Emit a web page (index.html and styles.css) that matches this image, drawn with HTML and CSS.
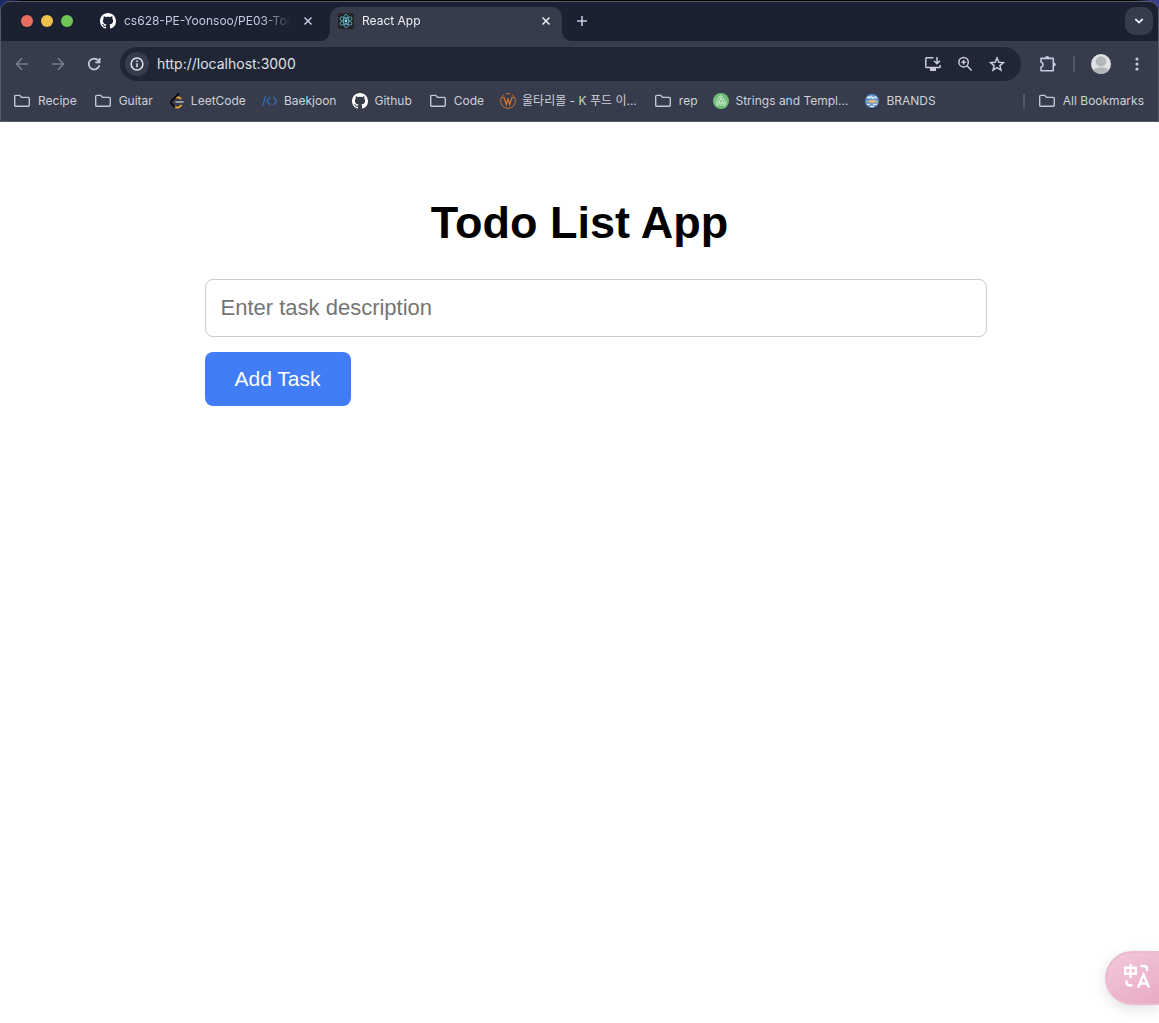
FILE: index.html
```html
<!DOCTYPE html>
<html lang="en">
<head>
<meta charset="utf-8">
<title>React App</title>
<meta name="viewport" content="width=device-width, initial-scale=1">
<link rel="stylesheet" href="styles.css">
</head>
<body>
<svg class="defs" aria-hidden="true">
  <symbol id="github" viewBox="0 0 16 16"><path fill="#fff" d="M8 0C3.58 0 0 3.58 0 8c0 3.54 2.29 6.53 5.47 7.59.4.07.55-.17.55-.38 0-.19-.01-.82-.01-1.49-2.01.37-2.53-.49-2.69-.94-.09-.23-.48-.94-.82-1.13-.28-.15-.68-.52-.01-.53.63-.01 1.08.58 1.23.82.72 1.21 1.87.87 2.33.66.07-.52.28-.87.51-1.07-1.78-.2-3.64-.89-3.64-3.95 0-.87.31-1.59.82-2.15-.08-.2-.36-1.02.08-2.12 0 0 .67-.21 2.2.82.64-.18 1.32-.27 2-.27s1.36.09 2 .27c1.53-1.04 2.2-.82 2.2-.82.44 1.1.16 1.92.08 2.12.51.56.82 1.27.82 2.15 0 3.07-1.87 3.75-3.65 3.95.29.25.54.73.54 1.48 0 1.07-.01 1.93-.01 2.2 0 .21.15.46.55.38A8.01 8.01 0 0 0 16 8c0-4.42-3.58-8-8-8z"/></symbol>
  <symbol id="folder" viewBox="0 0 20 16"><path fill="none" stroke="#c3c6cd" stroke-width="1.4" stroke-linejoin="round" d="M2.7 3.3c0-.6.3-.9.9-.9h4.2l2 2h6.6c.6 0 .9.3.9.9v7c0 .6-.3.9-.9.9H3.6c-.6 0-.9-.3-.9-.9z"/></symbol>
  <symbol id="close" viewBox="0 0 10 10"><path fill="none" stroke="currentColor" stroke-width="1.5" d="M1.5 1.5l7 7m0-7l-7 7"/></symbol>
</svg>

<header class="browser">
  <div class="frame">
    <div class="tabstrip">
      <div class="lights"><button class="light red" aria-label="Close window"></button><button class="light yellow" aria-label="Minimize window"></button><button class="light green" aria-label="Zoom window"></button></div>
      <div class="tab">
        <svg class="favicon"><use href="#github"/></svg>
        <span class="tab-title">cs628-PE-Yoonsoo/PE03-Todo</span>
        <button class="tab-close" aria-label="Close tab"><svg width="10" height="10"><use href="#close"/></svg></button>
      </div>
      <div class="tab active">
        <svg class="favicon" viewBox="0 0 16 16"><rect width="16" height="16" rx="2" fill="#242424"/><g fill="none" stroke="#62b8d0" stroke-width=".8"><ellipse cx="8" cy="8" rx="2.6" ry="6.7"/><ellipse cx="8" cy="8" rx="2.6" ry="6.7" transform="rotate(60 8 8)"/><ellipse cx="8" cy="8" rx="2.6" ry="6.7" transform="rotate(120 8 8)"/></g><circle cx="8" cy="8" r="1.4" fill="#7fdcf2"/></svg>
        <span class="tab-title">React App</span>
        <button class="tab-close" aria-label="Close tab"><svg width="10" height="10"><use href="#close"/></svg></button>
      </div>
      <button class="new-tab" aria-label="New tab"><svg width="12" height="12" viewBox="0 0 12 12"><path stroke="#c5cbe0" stroke-width="1.6" d="M6 1v10M1 6h10"/></svg></button>
      <button class="tab-search" aria-label="Search tabs"><svg width="10" height="8" viewBox="0 0 10 8"><path fill="none" stroke="#eceef4" stroke-width="1.8" d="M1.3 2L5 5.6 8.7 2"/></svg></button>
    </div>

    <div class="toolbar">
      <nav class="history" aria-label="History">
        <button class="tool dim" aria-label="Back"><svg width="14" height="14" viewBox="0 0 14 14"><path d="M13 7H1.5M7 1.3L1.4 7 7 12.7"/></svg></button>
        <button class="tool dim" aria-label="Forward"><svg width="14" height="14" viewBox="0 0 14 14"><path d="M1 7h11.5M7 1.3L12.6 7 7 12.7"/></svg></button>
        <button class="tool" aria-label="Reload"><svg width="14" height="14" viewBox="0 0 14 14"><path stroke-width="1.7" d="M12.4 8.2A5.4 5.4 0 1 1 11.2 3.5L12.6 5M12.6 1v4.3H8.3"/></svg></button>
      </nav>
      <div class="omnibox">
        <button class="site-info" aria-label="Site information"><svg width="14" height="14" viewBox="0 0 14 14"><circle cx="7" cy="7" r="5.9"/><path d="M7 6.2v4M7 3.6v1.5"/></svg></button>
        <input class="url" type="text" aria-label="Address" value="http://localhost:3000">
        <button class="tool" aria-label="Install app"><svg width="16" height="16" viewBox="0 0 16 16"><path d="M8.500 1.700H1.600c-.5 0-.8.3-.8.8v8.200c0 .5.3.8.8.8h12.800c.5 0 .8-.3.8-.8V9M12 1v6.500M9 4.800l3 3 3-3"/><path fill="#c9ccd8" stroke="none" d="M5 12h6v3H5z"/></svg></button>
        <button class="tool" aria-label="Zoom level"><svg width="16" height="16" viewBox="0 0 16 16"><circle cx="6.6" cy="6.2" r="4.7"/><path d="M10 9.700l4.600 4.800"/><path d="M6.600 4v4.400M4.400 6.200h4.400"/></svg></button>
        <button class="tool" aria-label="Bookmark this tab"><svg width="16" height="16" viewBox="0 0 16 16"><path d="M8 2l1.800 4.200 4.600.4-3.500 3 1.100 4.500L8 11.700l-4 2.400 1.100-4.500-3.500-3 4.600-.4z"/></svg></button>
      </div>
      <div class="actions">
        <button class="tool lavender" aria-label="Extensions"><svg width="18" height="18" viewBox="0 0 18 18"><path stroke-width="1.600" stroke-linejoin="round" d="M2 3.400h12.300v12.300H2v-3.500c2.700-.9 2.700-4.400 0-5.300z"/><path fill="currentColor" stroke="none" d="M6.100 3a2.100 2.100 0 0 1 4.200 0zM14.700 7.400a2.100 2.100 0 0 1 0 4.200z"/></svg></button>
        <span class="divider"></span>
        <button class="avatar" aria-label="Profile"><svg width="20" height="20" viewBox="0 0 20 20"><circle cx="10" cy="10" r="10" fill="#dfe2e2"/><circle cx="10" cy="7.4" r="5.2" fill="#b2b6b8"/><path fill="#b2b6b8" d="M2 16c3.8-3.6 12.2-3.6 16 0a10 10 0 0 1-16 0z"/></svg></button>
        <button class="more" aria-label="Menu"><svg width="4" height="16" viewBox="0 0 4 16" fill="#c5cbe0"><circle cx="2" cy="3" r="1.6"/><circle cx="2" cy="8" r="1.6"/><circle cx="2" cy="13" r="1.6"/></svg></button>
      </div>
    </div>

    <nav class="bookmarks" aria-label="Bookmarks">
      <a href="#"><svg class="folder"><use href="#folder"/></svg><span>Recipe</span></a>
      <a href="#"><svg class="folder"><use href="#folder"/></svg><span>Guitar</span></a>
      <a href="#"><svg class="favicon" viewBox="0 0 16 16" fill="none" stroke-linecap="round" stroke-width="1.9"><path stroke="#eba73b" d="M7.500 4.600c1.500-1 2.600-.6 4 .9M12 12.500c-2 2.600-4.200 2.600-6 1"/><path stroke="#090a0c" d="M9.500 1L2.800 7.700c-1 1-1 2.300 0 3.300l2.600 2.700"/><path stroke="#b7b9bd" stroke-width="1.6" d="M7 9h7"/></svg><span>LeetCode</span></a>
      <a href="#"><svg class="favicon" viewBox="0 0 16 16" fill="none" stroke="#386bb0" stroke-width="1.2"><path d="M3.500 3L.7 13M8.300 4L4.800 8l3.500 4M11.300 4l3.500 4-3.500 4"/></svg><span>Baekjoon</span></a>
      <a href="#"><svg class="favicon"><use href="#github"/></svg><span>Github</span></a>
      <a href="#"><svg class="folder"><use href="#folder"/></svg><span>Code</span></a>
      <a href="#"><svg class="favicon" viewBox="0 0 16 16" fill="none" stroke="#cc7130"><path d="M4 1.700A7.400 7.400 0 1 0 12 1.700M5.500 1A7.500 7.500 0 0 1 10.500 1"/><path stroke-width="1.300" d="M2.500 4.500h1.500L6.300 11.500 8 6l1.700 5.500 2.300-7h1.500"/></svg><span lang="ko">울타리몰 - K 푸드 이...</span></a>
      <a href="#"><svg class="folder"><use href="#folder"/></svg><span>rep</span></a>
      <a href="#"><svg class="favicon" viewBox="0 0 16 16"><circle cx="8" cy="8" r="8" fill="#71bd78"/><g fill="none" stroke="#cfebcf" stroke-width=".9" stroke-linejoin="round"><path d="M7 3h2l4 7-1 2H4l-1-2zM8 5.500l2.500 4.500h-5zM7 3l3.500 7M13 10H5.500M4 12l4-6.500"/></g></svg><span>Strings and Templ...</span></a>
      <a href="#"><svg class="favicon" viewBox="0 0 16 16"><circle cx="8" cy="8" r="7" fill="#5b91cf"/><path fill="none" stroke="#dce7f2" stroke-width="1.5" d="M3 5.200l2-1.400 1 1.400 1.500-1.500 1.500 1.600L11 4l2 1.400"/><path fill="#dfb77c" d="M2.500 9c2-2.300 7-3.300 10.500-1.200l.7 2.200-3.300-.7-2 1.100-2.600-1z"/><path stroke="#e6eaf0" stroke-width="1.2" d="M3 11.300h3M9 11.300h4M6 13.300h4"/></svg><span>BRANDS</span></a>
      <a class="all" href="#"><svg class="folder"><use href="#folder"/></svg><span>All Bookmarks</span></a>
    </nav>
  </div>
</header>

<main class="app">
  <h1>Todo List App</h1>
  <form>
    <input class="task" type="text" placeholder="Enter task description" aria-label="Task description">
    <button class="add" type="button">Add Task</button>
  </form>
</main>

<button class="translate" aria-label="Translate"><svg width="28" height="28" viewBox="0 0 28 28" fill="none" stroke="#fff" stroke-width="2.4"><path d="M2.200 4.700h10.600v6H2.200zM7.500 1v14"/><path d="M17.500 3h3.300c2.200 0 3.200 1 3.200 3.200V8M3.500 17.500v1.300c0 2.200 1.200 3.700 3.500 3.700h2.500"/><path d="M15 24.500L20.500 11.500 26 24.500M16.800 20.500h7.400"/></svg></button>
</body>
</html>
```
FILE: styles.css
```css
body {
  margin: 0;
  background: #fff;
  font-family: "Liberation Sans", Arial, sans-serif;
}

button {
  border: 0;
  padding: 0;
  background: none;
  color: inherit;
}

svg {
  display: block;
}

.defs {
  display: none;
}

/* Browser window */
.browser {
  padding-top: 1px;
  background: linear-gradient(90deg, #1d2c66 8px, #000 24px, #000 calc(100% - 24px), #39408a calc(100% - 8px));
  font-family: Inter, "Noto Sans CJK KR", sans-serif;
  font-size: 12px;
  line-height: 16px;
}

.frame {
  overflow: hidden;
  border: 1px solid #565b69;
  border-radius: 10px 10px 0 0;
  background: #363c4c;
}

.tabstrip {
  display: flex;
  align-items: flex-start;
  height: 34px;
  padding: 5px 5px 0 20px;
  background: #1b2130;
  color: #c5cbe0;
}

.lights {
  display: flex;
  flex: none;
  gap: 8px;
  padding: 8px 19px 0 0;
}

.light {
  width: 12px;
  height: 12px;
  border-radius: 50%;
}

.red { background: #e86f5e; }
.yellow { background: #f0bf4c; }
.green { background: #6fc553; }

.tab {
  display: flex;
  flex: 0 1 232px;
  align-items: center;
  gap: 8px;
  box-sizing: border-box;
  min-width: 60px;
  height: 34px;
  padding: 0 11px 6px 8px;
}

.tab.active {
  position: relative;
  margin-left: 6px;
  border-radius: 10px 10px 0 0;
  background: #363c4c;
  color: #eceef4;
}

/* Flared feet where the active tab meets the toolbar */
.tab.active::before,
.tab.active::after {
  content: "";
  position: absolute;
  bottom: 0;
  width: 10px;
  height: 10px;
}

.tab.active::before {
  right: 100%;
  background: radial-gradient(circle at 0 0, transparent 10px, #363c4c 10px);
}

.tab.active::after {
  left: 100%;
  background: radial-gradient(circle at 100% 0, transparent 10px, #363c4c 10px);
}

.favicon {
  flex: none;
  width: 16px;
  height: 16px;
}

.tab-title {
  flex: 1;
  overflow: hidden;
  white-space: nowrap;
  mask-image: linear-gradient(90deg, #000 calc(100% - 28px), transparent);
}

.tab-close {
  margin-left: 4px;
}

.new-tab {
  padding: 8px 14px;
}

.tab-search {
  display: grid;
  place-items: center;
  flex: none;
  width: 28px;
  height: 28px;
  margin-left: auto;
  border-radius: 10px;
  background: #363c4c;
}

/* Toolbar */
.toolbar {
  display: flex;
  align-items: center;
  gap: 16px;
  padding: 6px 13px 0 14px;
}

.history {
  display: flex;
  gap: 22px;
  padding-right: 3px;
}

.tool {
  color: #c9ccd8;
}

.tool svg,
.site-info svg {
  fill: none;
  stroke: currentColor;
  stroke-width: 1.5;
}

.dim {
  color: #777d8c;
}

.lavender {
  color: #c5cbe0;
}

.omnibox {
  display: flex;
  flex: 1;
  align-items: center;
  gap: 16px;
  min-width: 0;
  height: 34px;
  padding: 0 16px 0 5px;
  border-radius: 17px;
  background: #212635;
}

.site-info {
  display: grid;
  place-items: center;
  flex: none;
  width: 24px;
  height: 24px;
  margin-right: -8px;
  border-radius: 50%;
  background: #363c4c;
  color: #e1e3ea;
}

.url {
  flex: 1;
  min-width: 0;
  padding: 0;
  border: 0;
  outline: 0;
  background: none;
  color: #dfe1e8;
  font: 14px/20px Inter, sans-serif;
}

.actions {
  display: flex;
  align-items: center;
  gap: 16px;
  padding: 0 6px 0 2px;
}

.divider {
  width: 2px;
  height: 16px;
  border-radius: 1px;
  background: #515768;
}

.more {
  padding-left: 8px;
}

/* Bookmarks bar */
.bookmarks {
  display: flex;
  align-items: center;
  gap: 16px;
  padding: 12px 14px 12px 11px;
}

.bookmarks a {
  display: flex;
  flex: none;
  align-items: center;
  gap: 6px;
  color: #cfd1d8;
  text-decoration: none;
  white-space: nowrap;
}

.folder {
  flex: none;
  width: 20px;
  height: 16px;
}

.bookmarks .all {
  margin-left: auto;
  padding-left: 14px;
  background: linear-gradient(#515768, #515768) 0 50% / 2px 14px no-repeat;
}

/* Todo app */
.app {
  max-width: 750px;
  margin: 0 auto;
  padding-top: 75px;
}

.app h1 {
  margin: 0 0 30px;
  font-size: 45px;
  line-height: 52px;
  text-align: center;
}

.task {
  display: block;
  width: 100%;
  margin-bottom: 15px;
  padding: 15px;
  border: 1px solid #ccc;
  border-radius: 8px;
  font: 22px/26px "Liberation Sans", Arial, sans-serif;
}

.task::placeholder {
  color: #757575;
}

.add {
  padding: 15px 30px;
  border-radius: 8px;
  background: #407df7;
  color: #fff;
  font: 21px/24px "Liberation Sans", Arial, sans-serif;
}

/* Floating translate handle docked to the window edge */
.translate {
  position: fixed;
  right: 0;
  bottom: 18px;
  box-sizing: border-box;
  width: 54px;
  height: 54px;
  padding: 0 0 3px 16px;
  border: 2px solid #ecbace;
  border-right: 0;
  border-radius: 27px 0 0 27px;
  background: linear-gradient(150deg, #f3c8da, #e8abc3);
  box-shadow: 0 4px 14px rgba(0, 0, 0, .12);
}
```
